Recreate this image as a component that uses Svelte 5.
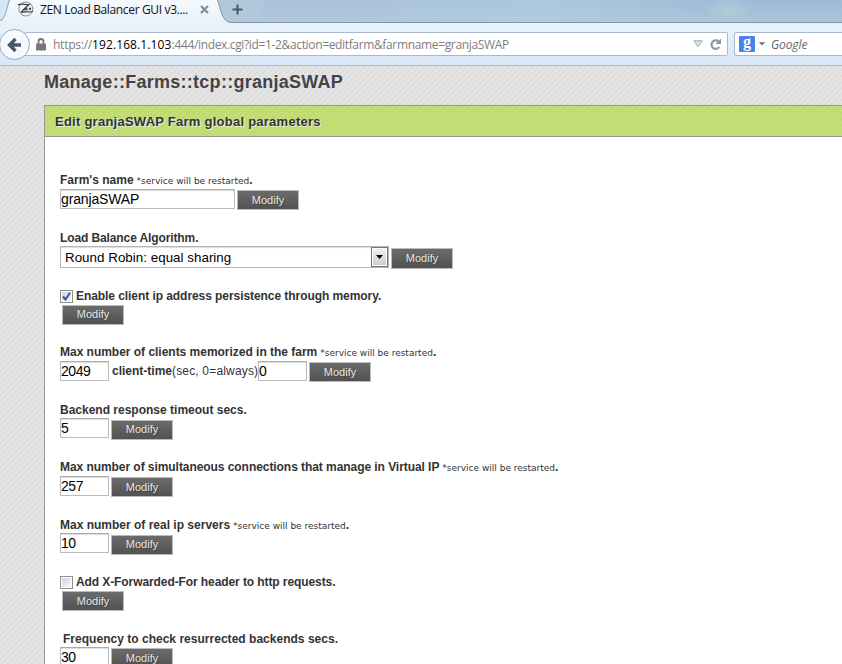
<script>
  const fields = [
    { label: "Farm's name", note: true, value: 'granjaSWAP', kind: 'text', h: 58, top: 1, btn: 2 },
    { label: 'Load Balance Algorithm.', value: 'Round Robin: equal sharing', kind: 'select', h: 58, top: 0, btn: 2 },
    { label: 'Enable client ip address persistence through memory.', kind: 'check', checked: true, h: 56, top: 0, btn: 1, raised: true },
    { label: 'Max number of clients memorized in the farm', note: true, value: '2049', kind: 'double', h: 58, top: 1, btn: 2 },
    { label: 'Backend response timeout secs.', value: '5', kind: 'num', h: 57, top: 0, btn: 2, raised: true },
    { label: 'Max number of simultaneous connections that manage in Virtual IP', note: true, value: '257', kind: 'num', h: 58, top: 1, btn: 2 },
    { label: 'Max number of real ip servers', note: true, value: '10', kind: 'num', h: 57, top: 0, btn: 2, raised: true },
    { label: 'Add X-Forwarded-For header to http requests.', kind: 'check', checked: false, h: 57, top: 0, btn: 1 },
    { label: 'Frequency to check resurrected backends secs.', value: '30', kind: 'num', indent: true, h: 60, top: 0, btn: 1 }
  ];
</script>

<div class="window">
  <header class="tabs">
    <svg class="strip" width="842" height="23" viewBox="0 0 842 23">
      <defs>
        <linearGradient id="active" x2="0" y2="1"><stop stop-color="#f6fafe" /><stop offset="1" stop-color="#e8f1fa" /></linearGradient>
        <linearGradient id="idle" x2="0" y2="1"><stop stop-color="#d9e8f2" /><stop offset="1" stop-color="#c2d5e3" /></linearGradient>
      </defs>
      <path d="M0 0H9C7 11 6 19 0 21Z" fill="#d2e9f3" />
      <path d="M0 23V21C6 20 7 8 10 0H217C221 7 220 22 232 22.5V23Z" fill="url(#active)" />
      <path d="M0 20.5C6 19 6 8 9.500 0" fill="none" stroke="#8ea5b7" />
      <path d="M217 0C221 8 221 22 232 22.500H254C262 20 261 7 265 0Z" fill="url(#idle)" opacity=".15" />
      <path d="M217.500 0C221 8 221 22.500 232 22.500H842" fill="none" stroke="#8296a8" />
    </svg>
    <div class="tabline">
      <svg class="fav" width="18" height="18" viewBox="0 0 18 18" fill="none" stroke="#3e4145">
        <circle cx="8.800" cy="9" r="7" stroke="#858b90" />
        <path d="M1 5C4 3 8 5 12 4.500C9 7 6.500 9.500 4 12.500C7 11 11 12.500 16 11.500M7.500 10.500C8.500 7.500 11 8 9.500 10.500M12 10C12.500 7.500 14 7.500 13.500 10" stroke-width="1.200" />
      </svg>
      <span class="tabtitle">ZEN Load Balancer GUI v3....</span>
      <svg class="close" width="9" height="9" viewBox="0 0 9 9"><path d="M1 1L8 8M8 1L1 8" stroke="#7e909b" stroke-width="2.200" /></svg>
      <svg class="plus" width="11" height="11" viewBox="0 0 11 11"><path d="M5.500 .5V10.500M.5 5.500H10.500" stroke="#44596a" stroke-width="2" /></svg>
    </div>
  </header>
  <nav class="toolbar">
    <div class="back">
      <svg width="16" height="16" viewBox="0 0 16 16"><path d="M8.500 2L2.500 8L8.500 14M3.500 8H14" fill="none" stroke="#48566a" stroke-width="3.400" /></svg>
    </div>
    <div class="address">
      <svg class="lock" width="10" height="13" viewBox="0 0 10 13"><path d="M2.500 6V3.500a2.500 2.500 0 0 1 5 0V6" fill="none" stroke="#777" stroke-width="1.800" /><rect y="5.500" width="10" height="7" rx="1" fill="#777" /></svg>
      <span class="url"><span class="u1">https://</span><b>192.168.1.103</b><span class="u2">:444/index.cgi?id=1-2&amp;action=editfarm&amp;farmname=granjaSWAP</span></span>
      <svg class="drop" width="10" height="8" viewBox="0 0 10 8"><path d="M.8 .8H9.200L5 6.800Z" fill="#dce0e6" stroke="#a4adb8" /></svg>
      <svg class="reload" width="13" height="13" viewBox="0 0 13 13"><path d="M10.200 9A4.200 4.200 0 1 1 9.500 3.500" fill="none" stroke="#8a98a8" stroke-width="2.200" /><path d="M12 .5V6H6.500Z" fill="#8a98a8" /></svg>
    </div>
    <div class="search">
      <span class="g">g</span>
      <svg width="6" height="4" viewBox="0 0 6 4"><path d="M0 .3H6L3 3.500Z" fill="#6b6b6b" /></svg>
      <i>Google</i>
    </div>
  </nav>
  <main>
    <h1>Manage::Farms::tcp::granjaSWAP</h1>
    <section class="panel">
      <h2><span>Edit granjaSWAP Farm global parameters</span></h2>
      <form>
        {#each fields as f, i}
          <div class="field" style="height:{f.h}px">
            <div class="label l{i}" class:indent={f.indent}>
              {#if f.kind === 'check'}
                <span class="cb">{#if f.checked}<svg width="9" height="9" viewBox="0 0 9 9"><path d="M1 4.500L3.500 7.500L8 .8" fill="none" stroke="#40539a" stroke-width="2" /></svg>{/if}</span>
              {/if}
              <b>{f.label}</b>{#if f.note}<small>*service will be restarted</small><b>.</b>{/if}
            </div>
            <div class="row kind-{f.kind}">
              {#if f.kind === 'select'}
                <div class="select" style="margin-top:{f.top}px"><span>{f.value}</span><i class="arrow"><svg width="7" height="4" viewBox="0 0 7 4"><path d="M0 0H7L3.500 4Z" /></svg></i></div>
              {:else if f.kind !== 'check'}
                <div class="input" style="margin-top:{f.top}px">{f.value}</div>
              {/if}
              {#if f.kind === 'double'}
                <span class="ct"><b>client-time</b><span>(sec, 0=always)</span></span>
                <div class="input" style="margin-top:{f.top}px">0</div>
              {/if}
              <div class="btn" class:raised={f.raised} style="margin-top:{f.btn}px"><span>Modify</span></div>
            </div>
          </div>
        {/each}
      </form>
    </section>
  </main>
</div>

<style>
  :global(body) { margin: 0; overflow: hidden; }
  * { box-sizing: border-box; }
  svg { display: block; flex: none; }
  .window { width: 842px; height: 664px; overflow: hidden; display: flex; flex-direction: column; font-family: "Liberation Sans", Arial, sans-serif; white-space: nowrap; }
  .tabs { position: relative; height: 23px; flex: none; background: radial-gradient(ellipse 22px 16px at 728px 10px, #b1cbd8, transparent), linear-gradient(#ffffff00, #bad0da80), linear-gradient(90deg, #a5bdd3, #a9c2dc 45%, #abc7dd 65%, #9fbad8 85%); }
  .strip { position: absolute; left: 0; top: 0; }
  .tabline { position: relative; display: flex; height: 18px; align-items: center; padding-left: 17px; font: 12px "Open Sans", "Noto Sans", sans-serif; color: #111; }
  .tabtitle { width: 149px; margin-left: 5px; letter-spacing: -.35px; }
  .close { margin-left: 11px; }
  .plus { margin-left: 23px; }
  .toolbar { height: 43px; flex: none; display: flex; align-items: flex-start; border-bottom: 1px solid #a2b8cf; background: linear-gradient(#e9f2fa, #d9e8f7); }
  .back { width: 31px; height: 31px; margin: 6px 0 0 -1px; border: 1px solid #97a9bd; border-radius: 50%; background: #f6f9fd; display: flex; align-items: center; justify-content: center; flex: none; z-index: 1; }
  .address { width: 704px; height: 24px; margin: 9px 0 0 -6px; padding-left: 11px; border: 1px solid #a9b9cd; border-radius: 2px; background: #fff; display: flex; align-items: center; flex: none; }
  .url { width: 640px; flex: none; margin-left: 7px; font: 12px "Open Sans", "Noto Sans", sans-serif; color: #7e7e7e; }
  .url b { font-weight: 400; color: #000; letter-spacing: .12px; }
  .u1 { letter-spacing: -.25px; }
  .u2 { letter-spacing: -.35px; }
  .reload { margin-left: 6px; }
  .search { width: 120px; height: 24px; margin: 9px 0 0 6px; border: 1px solid #a9b9cd; border-radius: 2px; background: #fff; display: flex; align-items: center; padding-left: 4px; flex: none; }
  .g { width: 16px; height: 16px; border-radius: 1px; background: #4583ee; color: #fff; font: bold 16px/11px "Liberation Serif", serif; text-align: center; margin-right: 4px; }
  .search i { margin-left: 6px; font: italic 12px "Open Sans", "Noto Sans", sans-serif; color: #666; letter-spacing: -.1px; }
  main { flex: 1; padding-left: 44px; background: repeating-linear-gradient(135deg, #e4e4e4 0 2.830px, #dcdcdc 2.830px 4.243px); }
  h1 { margin: 0; height: 39px; padding-top: 5px; font-size: 18px; line-height: 22px; color: #444; letter-spacing: .27px; }
  .panel { border-left: 1px solid #989898; height: 600px; background: #fff; }
  h2 { margin: 0; height: 32px; border: solid #989898; border-width: 1px 0; padding-left: 10px; font-size: 13px; line-height: 31px; letter-spacing: .25px; color: #333; background: repeating-linear-gradient(135deg, #c3dd77 0 2.830px, #bfda71 2.830px 4.243px); text-shadow: 1px 1px 1px #eee; }
  form { padding: 36px 0 0 15px; }
  .label { height: 15px; display: flex; align-items: baseline; font-size: 12px; line-height: 15px; color: #333; }
  .l1 { letter-spacing: -.11px; }
  .l2 { letter-spacing: -.065px; }
  .l3 { letter-spacing: -.02px; }
  .l5 { letter-spacing: -.06px; }
  .l7 { letter-spacing: -.09px; }
  .l8 { letter-spacing: .02px; }
  .indent { padding-left: 3px; }
  small { margin-left: 3px; font: 9px "DejaVu Sans", sans-serif; letter-spacing: 0; color: #333; }
  .cb { width: 13px; height: 13px; margin-right: 3px; border: 1px solid #8e8f8f; background: linear-gradient(135deg, #cdd1d6, #fafafa); box-shadow: inset 0 0 0 1px #fff; display: flex; align-items: center; justify-content: center; align-self: flex-start; margin-top: 1px; }
  .row { display: flex; align-items: flex-start; gap: 2px; }
  .kind-check { padding-left: 2px; }
  .input { width: 49px; height: 20px; border: 1px solid #bcbcbc; border-top-color: #aaa; box-shadow: inset 0 1px 1px #ddd; background: #fff; font-size: 14px; letter-spacing: -.45px; line-height: 18px; color: #000; flex: none; }
  .kind-text .input { width: 175px; letter-spacing: -.15px; }
  .select { width: 329px; height: 22px; border: 1px solid #b5b5b5; box-shadow: inset 0 1px 1px #ddd; display: flex; justify-content: space-between; padding-left: 4px; font-size: 13.330px; line-height: 21px; letter-spacing: .04px; color: #000; flex: none; }
  .arrow { width: 17px; height: 20px; border: 1px solid #777; box-shadow: inset 0 0 0 1px #fff; background: linear-gradient(#f2f2f2, #ccc); display: flex; align-items: center; justify-content: center; }
  .ct { width: 147px; padding-left: 1px; margin-right: -2px; font-size: 12px; line-height: 23px; color: #333; }
  .ct span { letter-spacing: .17px; }
  .btn { width: 62px; height: 20px; border: 1px solid #bbb; background: linear-gradient(#6b6b6b, #525252); color: #e6e6e6; font-size: 11px; line-height: 18px; text-align: center; text-shadow: 1px 1px 1px #444; flex: none; }
  .kind-select .btn { height: 21px; line-height: 19px; }
  .raised { line-height: 16px; }
</style>
